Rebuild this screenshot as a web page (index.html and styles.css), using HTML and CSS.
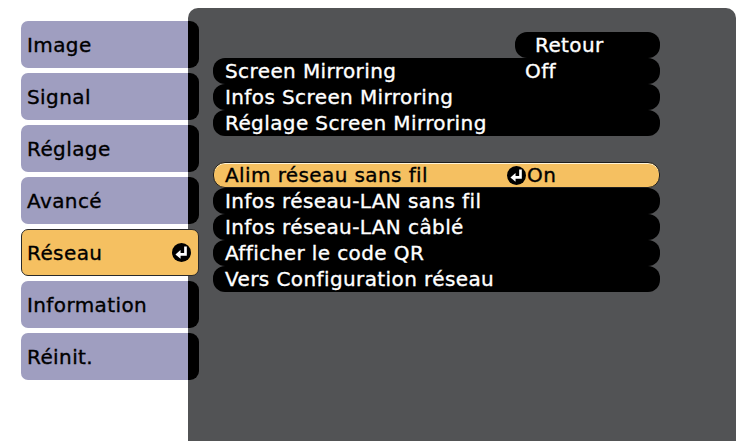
FILE: index.html
```html
<!DOCTYPE html>
<html lang="fr">
<head>
<meta charset="utf-8">
<title>Réseau</title>
<link rel="stylesheet" href="styles.css">
</head>
<body>
<div class="screen">
  <nav class="tabs">
    <div class="tab">Image</div>
    <div class="tab">Signal</div>
    <div class="tab">Réglage</div>
    <div class="tab">Avancé</div>
    <div class="tab active">Réseau
      <svg class="enter" viewBox="0 0 20 20" width="19" height="19"><circle cx="10" cy="10" r="10" fill="#000"/><path d="M14.2 3.8 V12 H8" fill="none" stroke="#fff" stroke-width="2.8"/><path d="M3.6 12 L9 7.4 L9 16.6 Z" fill="#fff"/></svg>
    </div>
    <div class="tab">Information</div>
    <div class="tab">Réinit.</div>
  </nav>
  <section class="panel">
    <div class="rows">
      <div class="row back"><span class="pill">Retour</span></div>
      <div class="row"><span class="label">Screen Mirroring</span><span class="value">Off</span></div>
      <div class="row"><span class="label">Infos Screen Mirroring</span></div>
      <div class="row"><span class="label">Réglage Screen Mirroring</span></div>
      <div class="row blank"></div>
      <div class="row selected"><span class="label">Alim réseau sans fil</span><span class="value"><svg class="enter small" viewBox="0 0 20 20" width="19" height="19"><circle cx="10" cy="10" r="10" fill="#000"/><path d="M14.2 3.8 V12 H8" fill="none" stroke="#fff" stroke-width="2.8"/><path d="M3.6 12 L9 7.4 L9 16.6 Z" fill="#fff"/></svg>On</span></div>
      <div class="row"><span class="label">Infos réseau-LAN sans fil</span></div>
      <div class="row"><span class="label">Infos réseau-LAN câblé</span></div>
      <div class="row"><span class="label">Afficher le code QR</span></div>
      <div class="row"><span class="label">Vers Configuration réseau</span></div>
    </div>
  </section>
</div>
</body>
</html>
```

FILE: styles.css
```css
html, body {
  margin: 0;
  padding: 0;
  background: #ffffff;
}

body {
  font-family: "DejaVu Sans", "Liberation Sans", sans-serif;
  font-size: 20px;
  letter-spacing: 0.4px;
  -webkit-text-stroke: 0.35px currentColor;
}

.screen {
  display: flex;
  width: 736px;
  height: 441px;
  overflow: hidden;
}

.tabs {
  flex: none;
  width: 167px;
  padding: 21px 0 0 21px;
  display: flex;
  flex-direction: column;
  gap: 5px;
  position: relative;
  z-index: 2;
}

.tab {
  box-sizing: border-box;
  height: 47px;
  background: #9f9ec0;
  border-radius: 7px 0 0 7px;
  display: flex;
  align-items: center;
  padding-left: 6px;
  color: #000;
  position: relative;
}

.tab::after {
  content: "";
  position: absolute;
  left: 100%;
  top: 0;
  width: 11px;
  height: 100%;
  background: #000;
  border-radius: 0 9px 9px 0;
}

.tab.active {
  background: #f5c061;
  border: 1px solid #2a2a2a;
  border-radius: 7px;
  margin-right: -11px;
  padding-left: 5px;
  padding-right: 7px;
}

.tab.active::after {
  display: none;
}

.tab .enter {
  margin-left: auto;
}

.panel {
  flex: 1;
  margin-top: 8px;
  background: #525355;
  border-radius: 10px 10px 0 0;
  padding: 24px 0 0 25px;
  position: relative;
  z-index: 1;
}

.rows {
  width: 447px;
  display: flex;
  flex-direction: column;
}

.row {
  box-sizing: border-box;
  height: 26px;
  background: #000;
  color: #fff;
  border-radius: 12px;
  display: flex;
  align-items: center;
  padding-left: 12px;
  white-space: nowrap;
}

.label {
  flex: none;
  width: 300px;
}

.value {
  display: flex;
  align-items: center;
}

.row.back {
  background: transparent;
  justify-content: flex-end;
  padding-left: 0;
}

.pill {
  box-sizing: border-box;
  width: 145px;
  height: 26px;
  background: #000;
  border-radius: 12px;
  padding-left: 20px;
  display: flex;
  align-items: center;
}

.row.blank {
  background: transparent;
}

.row.selected {
  background: #f5c061;
  color: #000;
  border: 1px solid #1e1e1e;
  box-shadow: inset 0 1px 0 #fff4d8;
  padding-left: 11px;
}

.enter.small {
  margin-left: -18px;
  margin-right: 1px;
}
```
